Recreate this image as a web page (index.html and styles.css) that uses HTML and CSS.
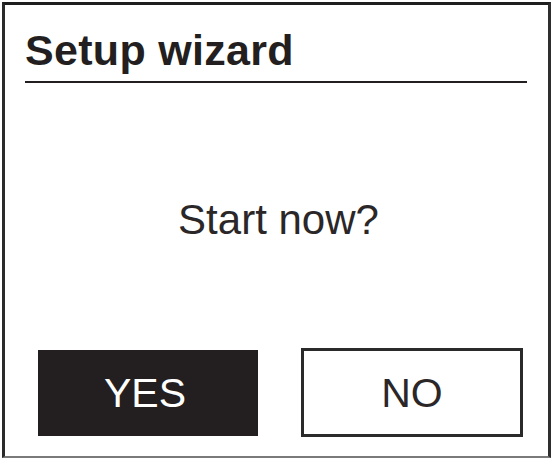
FILE: index.html
```html
<!DOCTYPE html>
<html lang="en">
<head>
<meta charset="utf-8">
<title>Setup wizard</title>
<link rel="stylesheet" href="styles.css">
</head>
<body>
<div class="screen">
  <div class="header">
    <h1 class="title">Setup wizard</h1>
  </div>
  <p class="message">Start now?</p>
  <div class="actions">
    <div class="btn btn-yes">YES</div>
    <div class="btn btn-no">NO</div>
  </div>
</div>
</body>
</html>
```
FILE: styles.css
```css
html, body {
  margin: 0;
  padding: 0;
  background: #ffffff;
}
body {
  font-family: "Liberation Sans", Arial, sans-serif;
  color: #231f20;
}
.screen {
  margin: 2px 0 0 2px;
  width: 549px;
  box-sizing: border-box;
  border-top: 3px solid #1e1e1e;
  border-left: 3px solid #2a2a2a;
  border-right: 3px solid #2e2e2e;
  border-bottom: 2px solid #7a7a7a;
  display: flex;
  flex-direction: column;
  background: #fff;
}
.header {
  padding: 20px 21px 0 20px;
}
.title {
  margin: 0;
  font-size: 43px;
  font-weight: 700;
  letter-spacing: 0.3px;
  line-height: 50px;
  padding-bottom: 6px;
  border-bottom: 2px solid #231f20;
}
.message {
  margin: 112px 0 0 0;
  font-size: 42px;
  line-height: 50px;
  text-align: center;
  padding-left: 4px;
  font-weight: 400;
  color: #2b2728;
}
.actions {
  display: flex;
  align-items: center;
  gap: 43px;
  margin-top: 103px;
  padding: 0 0 19px 33px;
  height: 89px;
}
.btn {
  box-sizing: border-box;
  display: flex;
  align-items: center;
  justify-content: center;
  font-size: 41px;
  line-height: 1;
  padding-top: 2px;
}
.btn-yes {
  width: 220px;
  height: 86px;
  background: #231f20;
  color: #ffffff;
  padding-right: 6px;
}
.btn-no {
  width: 222px;
  height: 89px;
  border: 3px solid #2a2a2a;
  color: #2b2728;
  background: #fff;
}
```
